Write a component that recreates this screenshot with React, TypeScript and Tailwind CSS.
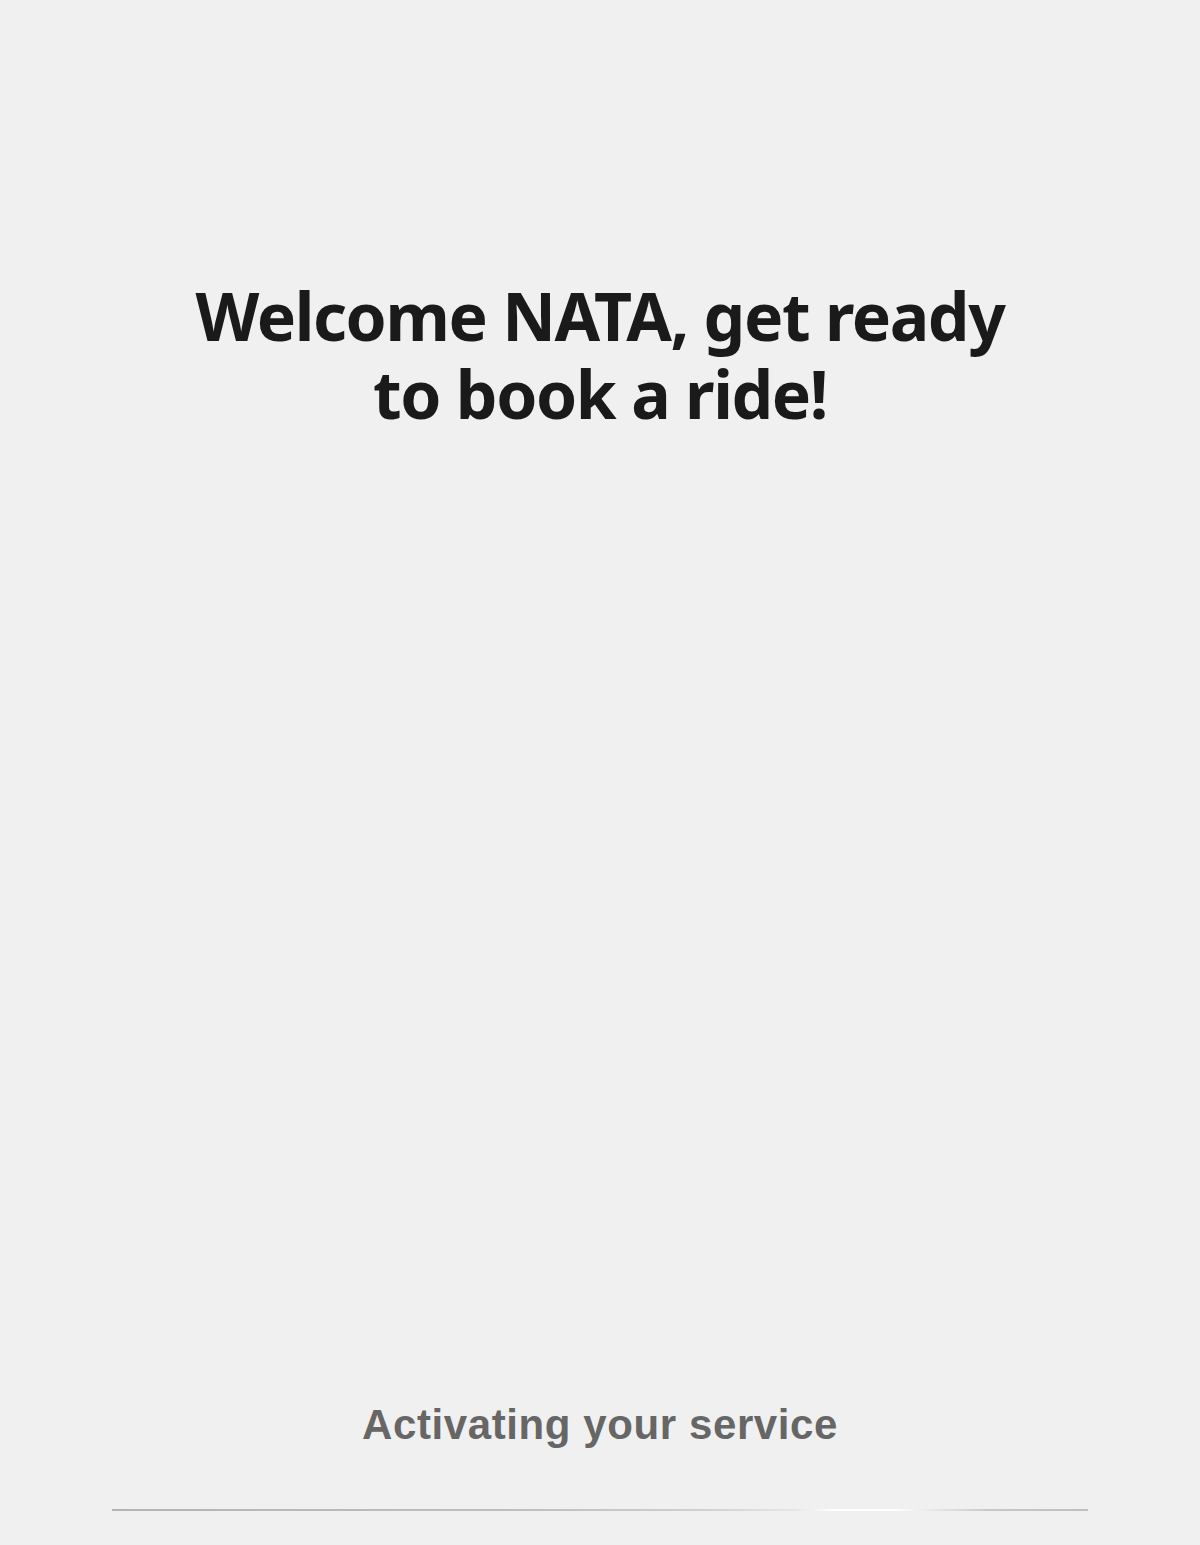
export default function App() {
  return (
    <div className="w-[1200px] h-[1545px] bg-[#f0f0f0] flex flex-col items-center">
      <h1
        className="mt-[276px] text-center text-[66px] leading-[78px] font-bold text-[#1a1a1a] tracking-[-1.4px]"
        style={{ fontFamily: '"Noto Sans", "Open Sans", sans-serif' }}
      >
        Welcome NATA, get ready
        <br />
        to book a ride!
      </h1>
      <div className="flex-1" />
      <p
        className="text-[42px] leading-[48px] font-bold text-[#666666] tracking-[0.6px]"
        style={{ fontFamily: '"Liberation Sans", Arial, sans-serif' }}
      >
        Activating your service
      </p>
      <div className="mt-[60px] mb-[34px] w-[976px] h-[2px] bg-[linear-gradient(90deg,#b4b4b4_0%,#bdbdbd_40%,#cfcfcf_60%,#e6e6e6_70%,#ffffff_74%,#ffffff_80%,#e8e8e8_84%,#c8c8c8_90%,#bfbfbf_100%)]" />
    </div>
  );
}
